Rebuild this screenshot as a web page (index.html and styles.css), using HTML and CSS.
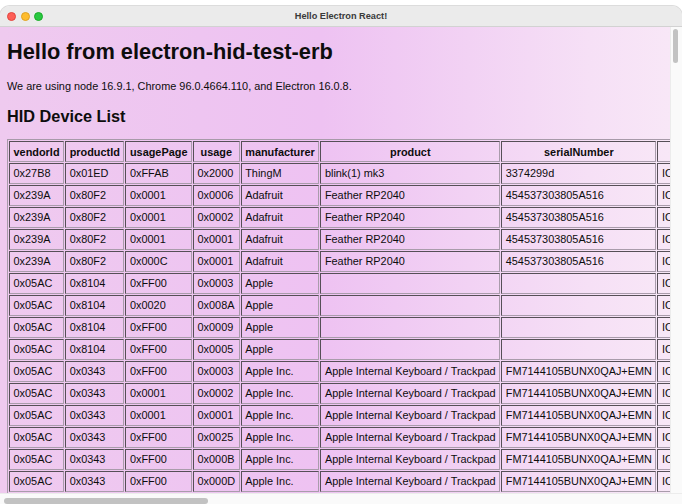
FILE: index.html
```html
<!DOCTYPE html>
<html lang="en">
<head>
<meta charset="utf-8">
<title>Hello Electron React!</title>
<link rel="stylesheet" href="styles.css">
</head>
<body>
<div class="window">
  <div class="titlebar">
    <div class="lights">
      <span class="light red"></span>
      <span class="light yellow"></span>
      <span class="light green"></span>
    </div>
    <div class="title">Hello Electron React!</div>
    <div></div>
  </div>
  <div class="main">
    <div class="viewport">
      <div class="page">
        <h1>Hello from electron-hid-test-erb</h1>
        <p>We are using node 16.9.1, Chrome 96.0.4664.110, and Electron 16.0.8.</p>
        <h2>HID Device List</h2>
        <table class="devices">
          <thead>
            <tr><th>vendorId</th><th>productId</th><th>usagePage</th><th>usage</th><th>manufacturer</th><th>product</th><th>serialNumber</th><th>path</th></tr>
          </thead>
          <tbody>
            <tr><td>0x27B8</td><td>0x01ED</td><td>0xFFAB</td><td>0x2000</td><td>ThingM</td><td>blink(1) mk3</td><td>3374299d</td><td>IOService:/AppleARMPE/arm-io@10F00000/AppleT600xIO/usb-drd1@2280000/AppleT8103USBXHCI@01000000/usb-drd1-port-hs@01100000/blink(1) mk3@01100000/IOUSBHostInterface@0/AppleUserUSBHostHIDDevice</td></tr>
            <tr><td>0x239A</td><td>0x80F2</td><td>0x0001</td><td>0x0006</td><td>Adafruit</td><td>Feather RP2040</td><td>454537303805A516</td><td>IOService:/AppleARMPE/arm-io@10F00000/AppleT600xIO/usb-drd0@2280000/AppleT8103USBXHCI@00000000/usb-drd0-port-hs@00100000/Feather RP2040@00100000/IOUSBHostInterface@3/AppleUserUSBHostHIDDevice</td></tr>
            <tr><td>0x239A</td><td>0x80F2</td><td>0x0001</td><td>0x0002</td><td>Adafruit</td><td>Feather RP2040</td><td>454537303805A516</td><td>IOService:/AppleARMPE/arm-io@10F00000/AppleT600xIO/usb-drd0@2280000/AppleT8103USBXHCI@00000000/usb-drd0-port-hs@00100000/Feather RP2040@00100000/IOUSBHostInterface@3/AppleUserUSBHostHIDDevice</td></tr>
            <tr><td>0x239A</td><td>0x80F2</td><td>0x0001</td><td>0x0001</td><td>Adafruit</td><td>Feather RP2040</td><td>454537303805A516</td><td>IOService:/AppleARMPE/arm-io@10F00000/AppleT600xIO/usb-drd0@2280000/AppleT8103USBXHCI@00000000/usb-drd0-port-hs@00100000/Feather RP2040@00100000/IOUSBHostInterface@3/AppleUserUSBHostHIDDevice</td></tr>
            <tr><td>0x239A</td><td>0x80F2</td><td>0x000C</td><td>0x0001</td><td>Adafruit</td><td>Feather RP2040</td><td>454537303805A516</td><td>IOService:/AppleARMPE/arm-io@10F00000/AppleT600xIO/usb-drd0@2280000/AppleT8103USBXHCI@00000000/usb-drd0-port-hs@00100000/Feather RP2040@00100000/IOUSBHostInterface@3/AppleUserUSBHostHIDDevice</td></tr>
            <tr><td>0x05AC</td><td>0x8104</td><td>0xFF00</td><td>0x0003</td><td>Apple</td><td></td><td></td><td>IOService:/AppleARMPE/arm-io@10F00000/AppleT600xIO/AppleDCPExpert/AppleHIDTransportHIDDevice</td></tr>
            <tr><td>0x05AC</td><td>0x8104</td><td>0x0020</td><td>0x008A</td><td>Apple</td><td></td><td></td><td>IOService:/AppleARMPE/arm-io@10F00000/AppleT600xIO/AppleDCPExpert/AppleHIDTransportHIDDevice</td></tr>
            <tr><td>0x05AC</td><td>0x8104</td><td>0xFF00</td><td>0x0009</td><td>Apple</td><td></td><td></td><td>IOService:/AppleARMPE/arm-io@10F00000/AppleT600xIO/AppleDCPExpert/AppleHIDTransportHIDDevice</td></tr>
            <tr><td>0x05AC</td><td>0x8104</td><td>0xFF00</td><td>0x0005</td><td>Apple</td><td></td><td></td><td>IOService:/AppleARMPE/arm-io@10F00000/AppleT600xIO/AppleDCPExpert/AppleHIDTransportHIDDevice</td></tr>
            <tr><td>0x05AC</td><td>0x0343</td><td>0xFF00</td><td>0x0003</td><td>Apple Inc.</td><td>Apple Internal Keyboard / Trackpad</td><td>FM7144105BUNX0QAJ+EMN</td><td>IOService:/AppleARMPE/arm-io@10F00000/AppleT600xIO/mtp@8C000000/AppleASCWrapV4/iop-mtp-nub/RTBuddy(MTP)/MTPKeyboard</td></tr>
            <tr><td>0x05AC</td><td>0x0343</td><td>0x0001</td><td>0x0002</td><td>Apple Inc.</td><td>Apple Internal Keyboard / Trackpad</td><td>FM7144105BUNX0QAJ+EMN</td><td>IOService:/AppleARMPE/arm-io@10F00000/AppleT600xIO/mtp@8C000000/AppleASCWrapV4/iop-mtp-nub/RTBuddy(MTP)/MTPKeyboard</td></tr>
            <tr><td>0x05AC</td><td>0x0343</td><td>0x0001</td><td>0x0001</td><td>Apple Inc.</td><td>Apple Internal Keyboard / Trackpad</td><td>FM7144105BUNX0QAJ+EMN</td><td>IOService:/AppleARMPE/arm-io@10F00000/AppleT600xIO/mtp@8C000000/AppleASCWrapV4/iop-mtp-nub/RTBuddy(MTP)/MTPKeyboard</td></tr>
            <tr><td>0x05AC</td><td>0x0343</td><td>0xFF00</td><td>0x0025</td><td>Apple Inc.</td><td>Apple Internal Keyboard / Trackpad</td><td>FM7144105BUNX0QAJ+EMN</td><td>IOService:/AppleARMPE/arm-io@10F00000/AppleT600xIO/mtp@8C000000/AppleASCWrapV4/iop-mtp-nub/RTBuddy(MTP)/MTPKeyboard</td></tr>
            <tr><td>0x05AC</td><td>0x0343</td><td>0xFF00</td><td>0x000B</td><td>Apple Inc.</td><td>Apple Internal Keyboard / Trackpad</td><td>FM7144105BUNX0QAJ+EMN</td><td>IOService:/AppleARMPE/arm-io@10F00000/AppleT600xIO/mtp@8C000000/AppleASCWrapV4/iop-mtp-nub/RTBuddy(MTP)/MTPKeyboard</td></tr>
            <tr><td>0x05AC</td><td>0x0343</td><td>0xFF00</td><td>0x000D</td><td>Apple Inc.</td><td>Apple Internal Keyboard / Trackpad</td><td>FM7144105BUNX0QAJ+EMN</td><td>IOService:/AppleARMPE/arm-io@10F00000/AppleT600xIO/mtp@8C000000/AppleASCWrapV4/iop-mtp-nub/RTBuddy(MTP)/MTPKeyboard</td></tr>
            <tr><td>0x05AC</td><td>0x0343</td><td>0xFF00</td><td>0x0048</td><td>Apple Inc.</td><td>Apple Internal Keyboard / Trackpad</td><td>FM7144105BUNX0QAJ+EMN</td><td>IOService:/AppleARMPE/arm-io@10F00000/AppleT600xIO/mtp@8C000000/AppleASCWrapV4/iop-mtp-nub/RTBuddy(MTP)/MTPKeyboard</td></tr>
            <tr><td>0x05AC</td><td>0x0343</td><td>0xFF00</td><td>0x000F</td><td>Apple Inc.</td><td>Apple Internal Keyboard / Trackpad</td><td>FM7144105BUNX0QAJ+EMN</td><td>IOService:/AppleARMPE/arm-io@10F00000/AppleT600xIO/mtp@8C000000/AppleASCWrapV4/iop-mtp-nub/RTBuddy(MTP)/MTPKeyboard</td></tr>
          </tbody>
        </table>
      </div>
    </div>
    <div class="vscroll"><div class="vthumb"></div></div>
  </div>
  <div class="hscroll"><div class="hthumb"></div></div>
</div>
</body>
</html>
```

FILE: styles.css
```css
html, body {
  margin: 0;
  padding: 0;
  background: #ffffff;
}

body {
  width: 682px;
  height: 504px;
  overflow: hidden;
  font-family: "Liberation Sans", Arial, Helvetica, sans-serif;
}

.window {
  margin-top: 6px;
  height: 498px;
  display: flex;
  flex-direction: column;
  border-radius: 10px 10px 0 0;
  overflow: hidden;
  background: #f7f7f7;
  box-shadow: 0 0 0 1px #dcdcdc;
}

.titlebar {
  height: 20px;
  flex: none;
  display: grid;
  grid-template-columns: 1fr auto 1fr;
  align-items: center;
  background: #ebebeb;
  border-bottom: 1px solid #d2d2d2;
}

.lights {
  display: flex;
  gap: 4.5px;
  padding-left: 7px;
}

.light {
  width: 9px;
  height: 9px;
  border-radius: 50%;
  box-sizing: border-box;
}

.red { background: #fe5f57; border: 0.5px solid #e2463f; }
.yellow { background: #febc2e; border: 0.5px solid #dea123; }
.green { background: #28c840; border: 0.5px solid #1aab29; }

.title {
  font-size: 9.2px;
  font-weight: bold;
  color: #3a3a3a;
}

.main {
  flex: 1;
  display: flex;
  min-height: 0;
}

.viewport {
  flex: 1;
  min-width: 0;
  overflow: hidden;
  background: linear-gradient(90deg, #efcaef 0%, #eec5f1 30%, #eec2f2 48%, #f2d2f4 70%, #f6e0f6 88%, #f8e7f7 100%);
}

.page {
  padding: 0 7px;
  color: #0d0d0d;
  font-size: 10.9px;
  display: flow-root;
}

h1 {
  font-size: 21.8px;
  line-height: 26px;
  margin: 12px 0 15px;
}

p {
  margin: 0;
  line-height: 13px;
}

h2 {
  font-size: 16.3px;
  line-height: 19px;
  margin: 14px 0 13px;
}

.devices {
  border: 1px outset #a79aa9;
  border-spacing: 1px;
  font-size: 10.9px;
  white-space: nowrap;
}

.devices th,
.devices td {
  border: 1px inset #a99cab;
  padding: 3px 3.55px 4px;
  line-height: 12px;
  text-align: left;
}

.devices th {
  text-align: center;
  font-weight: bold;
  padding-top: 4px;
  padding-bottom: 3px;
}

.vscroll {
  width: 8px;
  flex: none;
  background: #fafafa;
  border-left: 1px solid #ececec;
  padding: 2px 1px 0 2px;
}

.vthumb {
  height: 34px;
  width: 5px;
  border-radius: 3px;
  background: #c2c2c2;
}

.hscroll {
  height: 11px;
  flex: none;
  background: #fafafa;
  border-top: 1px solid #ececec;
  padding: 4px 0 0 4px;
  box-sizing: border-box;
}

.hthumb {
  width: 204px;
  height: 6px;
  border-radius: 3px;
  background: #c2c2c2;
}
```
